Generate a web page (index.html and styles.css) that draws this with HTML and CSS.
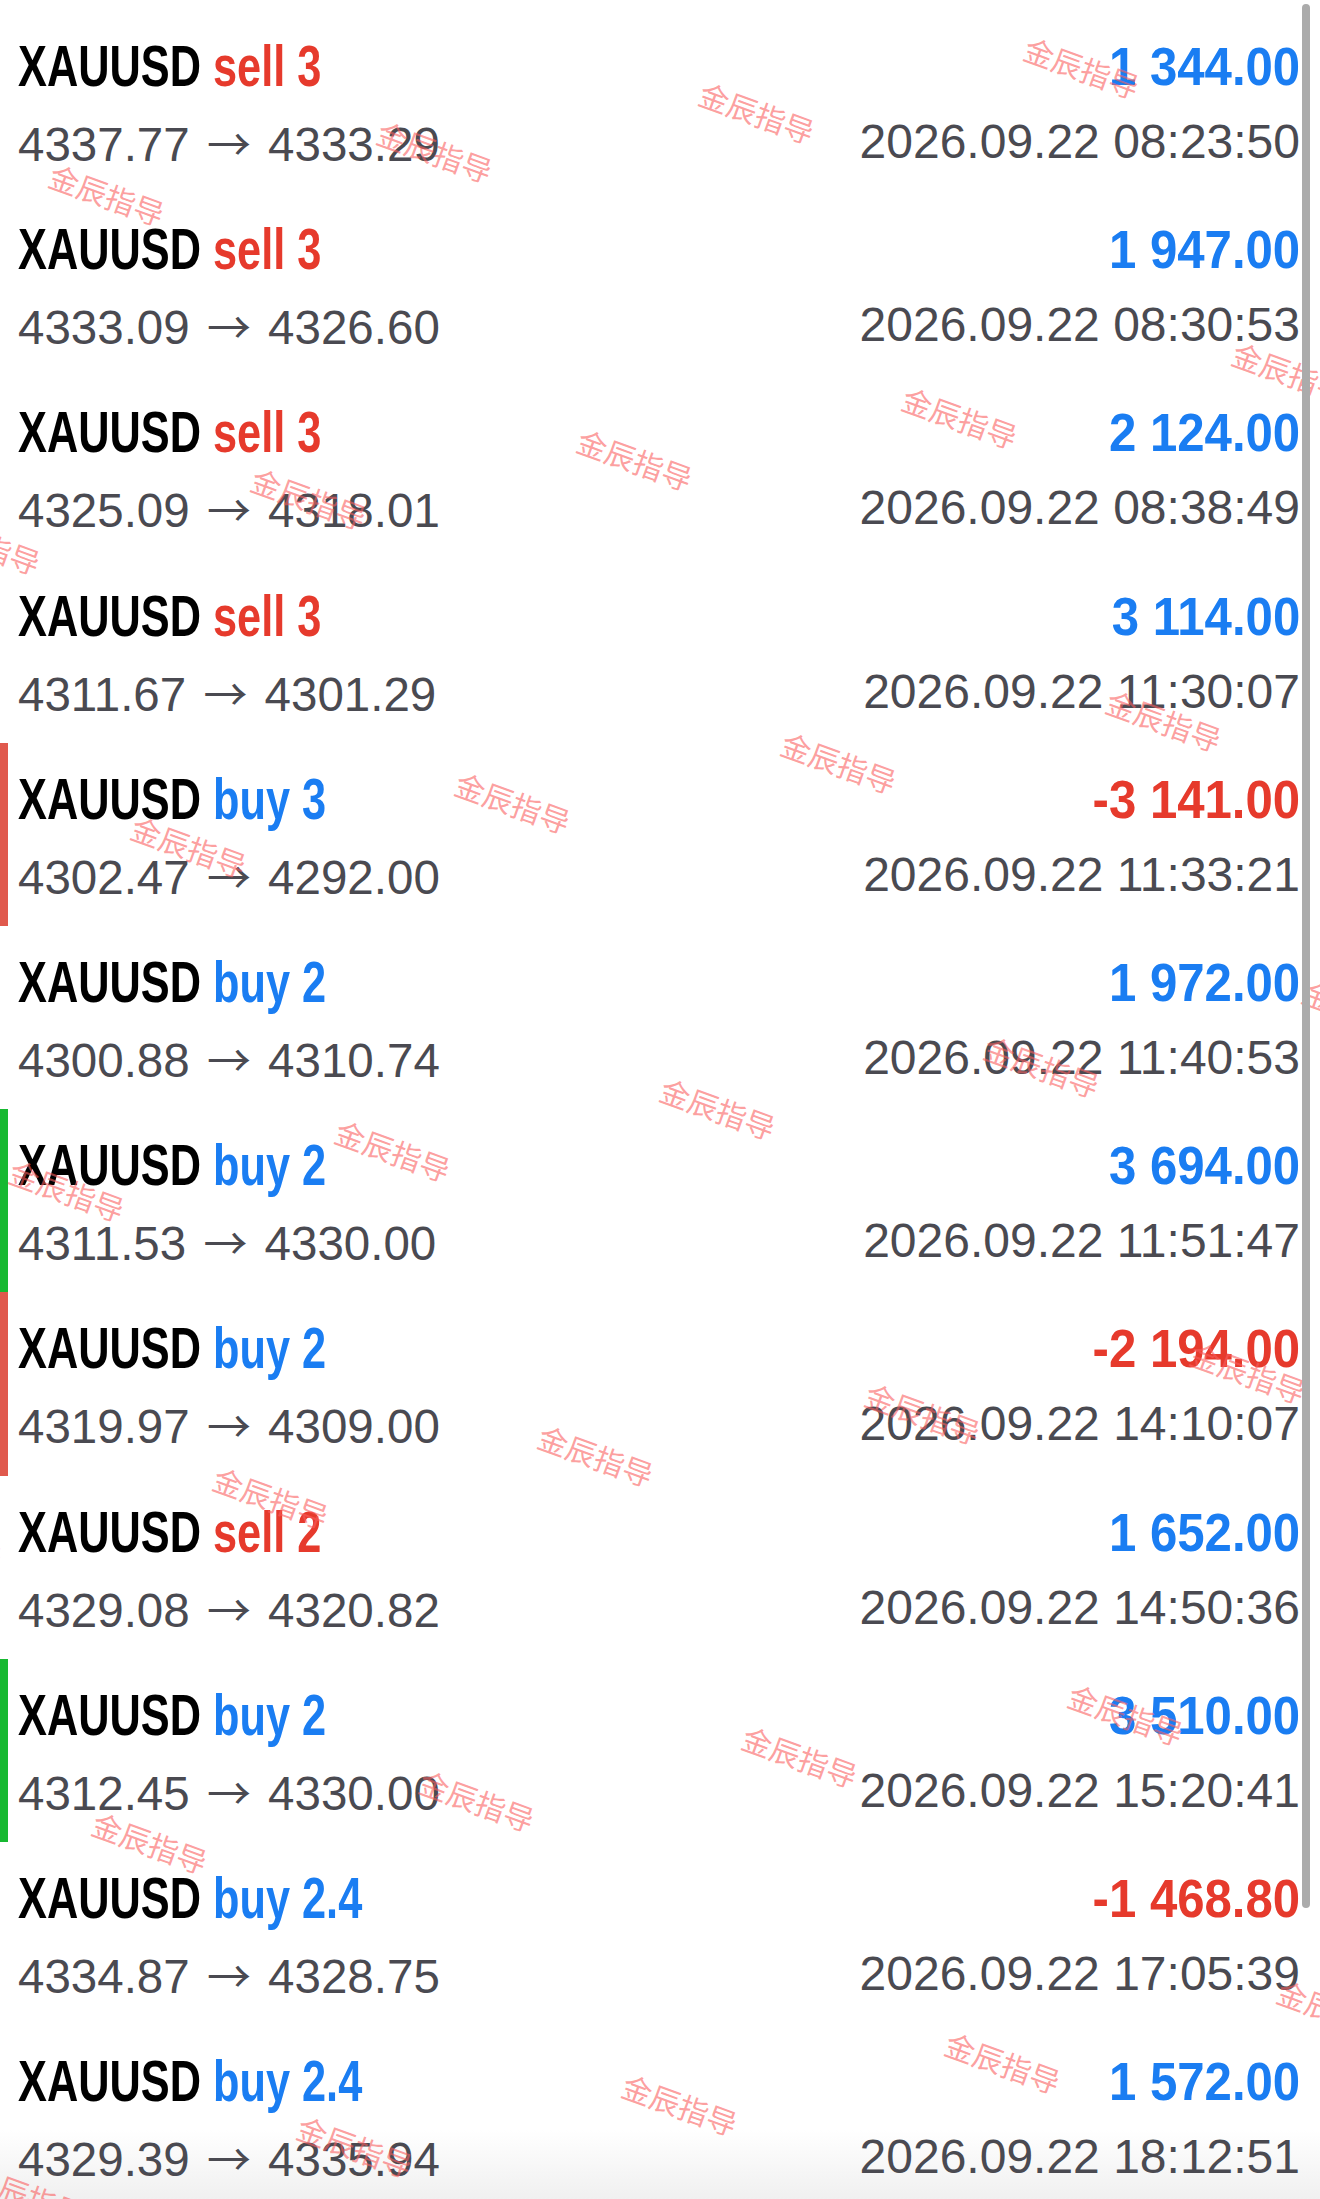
FILE: index.html
```html
<!DOCTYPE html>
<html lang="zh-CN">
<head>
    <meta charset="UTF-8">
    <meta name="viewport" content="width=device-width, initial-scale=1.0">
    <title>XAUUSD 历史</title>
    <link rel="stylesheet" href="styles.css">
</head>
<body>
    <div class="screen">
        <ul class="deals">
            <li class="deal">
                <div class="deal-left">
                    <div class="deal-title">XAUUSD <span class="sell">sell 3</span></div>
                    <div class="deal-price">4337.77 <span class="arrow">→</span> 4333.29</div>
                </div>
                <div class="deal-right">
                    <div class="deal-profit profit">1 344.00</div>
                    <div class="deal-time">2026.09.22 08:23:50</div>
                </div>
            </li>
            <li class="deal">
                <div class="deal-left">
                    <div class="deal-title">XAUUSD <span class="sell">sell 3</span></div>
                    <div class="deal-price">4333.09 <span class="arrow">→</span> 4326.60</div>
                </div>
                <div class="deal-right">
                    <div class="deal-profit profit">1 947.00</div>
                    <div class="deal-time">2026.09.22 08:30:53</div>
                </div>
            </li>
            <li class="deal">
                <div class="deal-left">
                    <div class="deal-title">XAUUSD <span class="sell">sell 3</span></div>
                    <div class="deal-price">4325.09 <span class="arrow">→</span> 4318.01</div>
                </div>
                <div class="deal-right">
                    <div class="deal-profit profit">2 124.00</div>
                    <div class="deal-time">2026.09.22 08:38:49</div>
                </div>
            </li>
            <li class="deal">
                <div class="deal-left">
                    <div class="deal-title">XAUUSD <span class="sell">sell 3</span></div>
                    <div class="deal-price">4311.67 <span class="arrow">→</span> 4301.29</div>
                </div>
                <div class="deal-right">
                    <div class="deal-profit profit">3 114.00</div>
                    <div class="deal-time">2026.09.22 11:30:07</div>
                </div>
            </li>
            <li class="deal mark-loss">
                <div class="deal-left">
                    <div class="deal-title">XAUUSD <span class="buy">buy 3</span></div>
                    <div class="deal-price">4302.47 <span class="arrow">→</span> 4292.00</div>
                </div>
                <div class="deal-right">
                    <div class="deal-profit loss">-3 141.00</div>
                    <div class="deal-time">2026.09.22 11:33:21</div>
                </div>
            </li>
            <li class="deal">
                <div class="deal-left">
                    <div class="deal-title">XAUUSD <span class="buy">buy 2</span></div>
                    <div class="deal-price">4300.88 <span class="arrow">→</span> 4310.74</div>
                </div>
                <div class="deal-right">
                    <div class="deal-profit profit">1 972.00</div>
                    <div class="deal-time">2026.09.22 11:40:53</div>
                </div>
            </li>
            <li class="deal mark-win">
                <div class="deal-left">
                    <div class="deal-title">XAUUSD <span class="buy">buy 2</span></div>
                    <div class="deal-price">4311.53 <span class="arrow">→</span> 4330.00</div>
                </div>
                <div class="deal-right">
                    <div class="deal-profit profit">3 694.00</div>
                    <div class="deal-time">2026.09.22 11:51:47</div>
                </div>
            </li>
            <li class="deal mark-loss">
                <div class="deal-left">
                    <div class="deal-title">XAUUSD <span class="buy">buy 2</span></div>
                    <div class="deal-price">4319.97 <span class="arrow">→</span> 4309.00</div>
                </div>
                <div class="deal-right">
                    <div class="deal-profit loss">-2 194.00</div>
                    <div class="deal-time">2026.09.22 14:10:07</div>
                </div>
            </li>
            <li class="deal">
                <div class="deal-left">
                    <div class="deal-title">XAUUSD <span class="sell">sell 2</span></div>
                    <div class="deal-price">4329.08 <span class="arrow">→</span> 4320.82</div>
                </div>
                <div class="deal-right">
                    <div class="deal-profit profit">1 652.00</div>
                    <div class="deal-time">2026.09.22 14:50:36</div>
                </div>
            </li>
            <li class="deal mark-win">
                <div class="deal-left">
                    <div class="deal-title">XAUUSD <span class="buy">buy 2</span></div>
                    <div class="deal-price">4312.45 <span class="arrow">→</span> 4330.00</div>
                </div>
                <div class="deal-right">
                    <div class="deal-profit profit">3 510.00</div>
                    <div class="deal-time">2026.09.22 15:20:41</div>
                </div>
            </li>
            <li class="deal">
                <div class="deal-left">
                    <div class="deal-title">XAUUSD <span class="buy">buy 2.4</span></div>
                    <div class="deal-price">4334.87 <span class="arrow">→</span> 4328.75</div>
                </div>
                <div class="deal-right">
                    <div class="deal-profit loss">-1 468.80</div>
                    <div class="deal-time">2026.09.22 17:05:39</div>
                </div>
            </li>
            <li class="deal">
                <div class="deal-left">
                    <div class="deal-title">XAUUSD <span class="buy">buy 2.4</span></div>
                    <div class="deal-price">4329.39 <span class="arrow">→</span> 4335.94</div>
                </div>
                <div class="deal-right">
                    <div class="deal-profit profit">1 572.00</div>
                    <div class="deal-time">2026.09.22 18:12:51</div>
                </div>
            </li>
        </ul>

        <!-- watermark layer -->
        <div class="watermarks">
            <span class="wm" style="left:1082px;top:67px">金辰指导</span>
            <span class="wm" style="left:757px;top:112px">金辰指导</span>
            <span class="wm" style="left:435px;top:151px">金辰指导</span>
            <span class="wm" style="left:107px;top:194px">金辰指导</span>
            <span class="wm" style="left:1290px;top:372px">金辰指导</span>
            <span class="wm" style="left:960px;top:417px">金辰指导</span>
            <span class="wm" style="left:635px;top:459px">金辰指导</span>
            <span class="wm" style="left:309px;top:498px">金辰指导</span>
            <span class="wm" style="left:-17px;top:543px">金辰指导</span>
            <span class="wm" style="left:1164px;top:720px">金辰指导</span>
            <span class="wm" style="left:839px;top:762px">金辰指导</span>
            <span class="wm" style="left:513px;top:802px">金辰指导</span>
            <span class="wm" style="left:189px;top:846px">金辰指导</span>
            <span class="wm" style="left:1360px;top:1010px">金辰指导</span>
            <span class="wm" style="left:1042px;top:1066px">金辰指导</span>
            <span class="wm" style="left:718px;top:1108px">金辰指导</span>
            <span class="wm" style="left:393px;top:1150px">金辰指导</span>
            <span class="wm" style="left:67px;top:1190px">金辰指导</span>
            <span class="wm" style="left:1248px;top:1372px">金辰指导</span>
            <span class="wm" style="left:923px;top:1413px">金辰指导</span>
            <span class="wm" style="left:596px;top:1455px">金辰指导</span>
            <span class="wm" style="left:271px;top:1497px">金辰指导</span>
            <span class="wm" style="left:-55px;top:1540px">金辰指导</span>
            <span class="wm" style="left:1126px;top:1714px">金辰指导</span>
            <span class="wm" style="left:800px;top:1756px">金辰指导</span>
            <span class="wm" style="left:477px;top:1800px">金辰指导</span>
            <span class="wm" style="left:150px;top:1842px">金辰指导</span>
            <span class="wm" style="left:1335px;top:2010px">金辰指导</span>
            <span class="wm" style="left:1003px;top:2062px">金辰指导</span>
            <span class="wm" style="left:680px;top:2104px">金辰指导</span>
            <span class="wm" style="left:355px;top:2146px">金辰指导</span>
            <span class="wm" style="left:28px;top:2195px">金辰指导</span>
        </div>

        <div class="scrollbar"></div>
    </div>
</body>
</html>
```

FILE: styles.css
```css
/* General reset */
html, body {
    margin: 0;
    padding: 0;
    overflow: hidden;
    background-color: #ffffff;
}

body {
    font-family: "Liberation Sans", Arial, sans-serif;
}

.screen {
    position: relative;
    width: 1320px;
    height: 2199px;
    overflow: hidden;
    background: linear-gradient(#ffffff 0, #ffffff 2130px, #f0f0f0 2199px);
}

/* Deal list */
.deals {
    list-style: none;
    margin: 0;
    padding: 10px 0 0 0;
}

.deal {
    display: flex;
    justify-content: space-between;
    box-sizing: border-box;
    height: 183.2px;
    padding: 26px 20px 0 18px;
}

/* colored marker on the left edge */
.mark-loss {
    padding-left: 10px;
    border-left: 8px solid #e0594d;
}

.mark-win {
    padding-left: 10px;
    border-left: 8px solid #17b931;
}

.deal-left,
.deal-right {
    display: flex;
    flex-direction: column;
    gap: 18px;
}

.deal-left {
    align-items: flex-start;
}

.deal-right {
    align-items: flex-end;
}

/* condensed bold look */
.deal-title,
.deal-profit {
    font-family: "Liberation Sans", Arial, sans-serif;
    font-weight: bold;
    line-height: 60px;
    white-space: nowrap;
}

.deal-title {
    font-size: 57px;
    color: #000000;
    transform: scaleX(0.76);
    transform-origin: left center;
}

.deal-profit {
    font-size: 54px;
    transform: scaleX(0.91);
    transform-origin: right center;
}

.deal-price,
.deal-time {
    font-size: 47.5px;
    line-height: 56px;
    color: #4a4a51;
    white-space: nowrap;
}

.deal-time {
    font-size: 48px;
}

.arrow {
    display: inline-block;
    margin: 0 4px;
    font-family: "Noto Sans CJK SC", sans-serif;
    font-size: 44px;
}

.sell,
.loss {
    color: #e63a2c;
}

.buy,
.profit {
    color: #1a7df2;
}

/* Watermarks */
.watermarks {
    position: absolute;
    inset: 0;
    pointer-events: none;
}

.wm {
    position: absolute;
    font-family: "Noto Sans CJK SC", sans-serif;
    font-size: 30px;
    line-height: 1;
    color: rgba(250, 95, 95, 0.6);
    white-space: nowrap;
    transform: translate(-50%, -50%) rotate(20deg);
}

/* Scroll indicator */
.scrollbar {
    position: absolute;
    left: 1302px;
    top: 4px;
    width: 8px;
    height: 1904px;
    border-radius: 4px;
    background-color: #ababab;
}
```
